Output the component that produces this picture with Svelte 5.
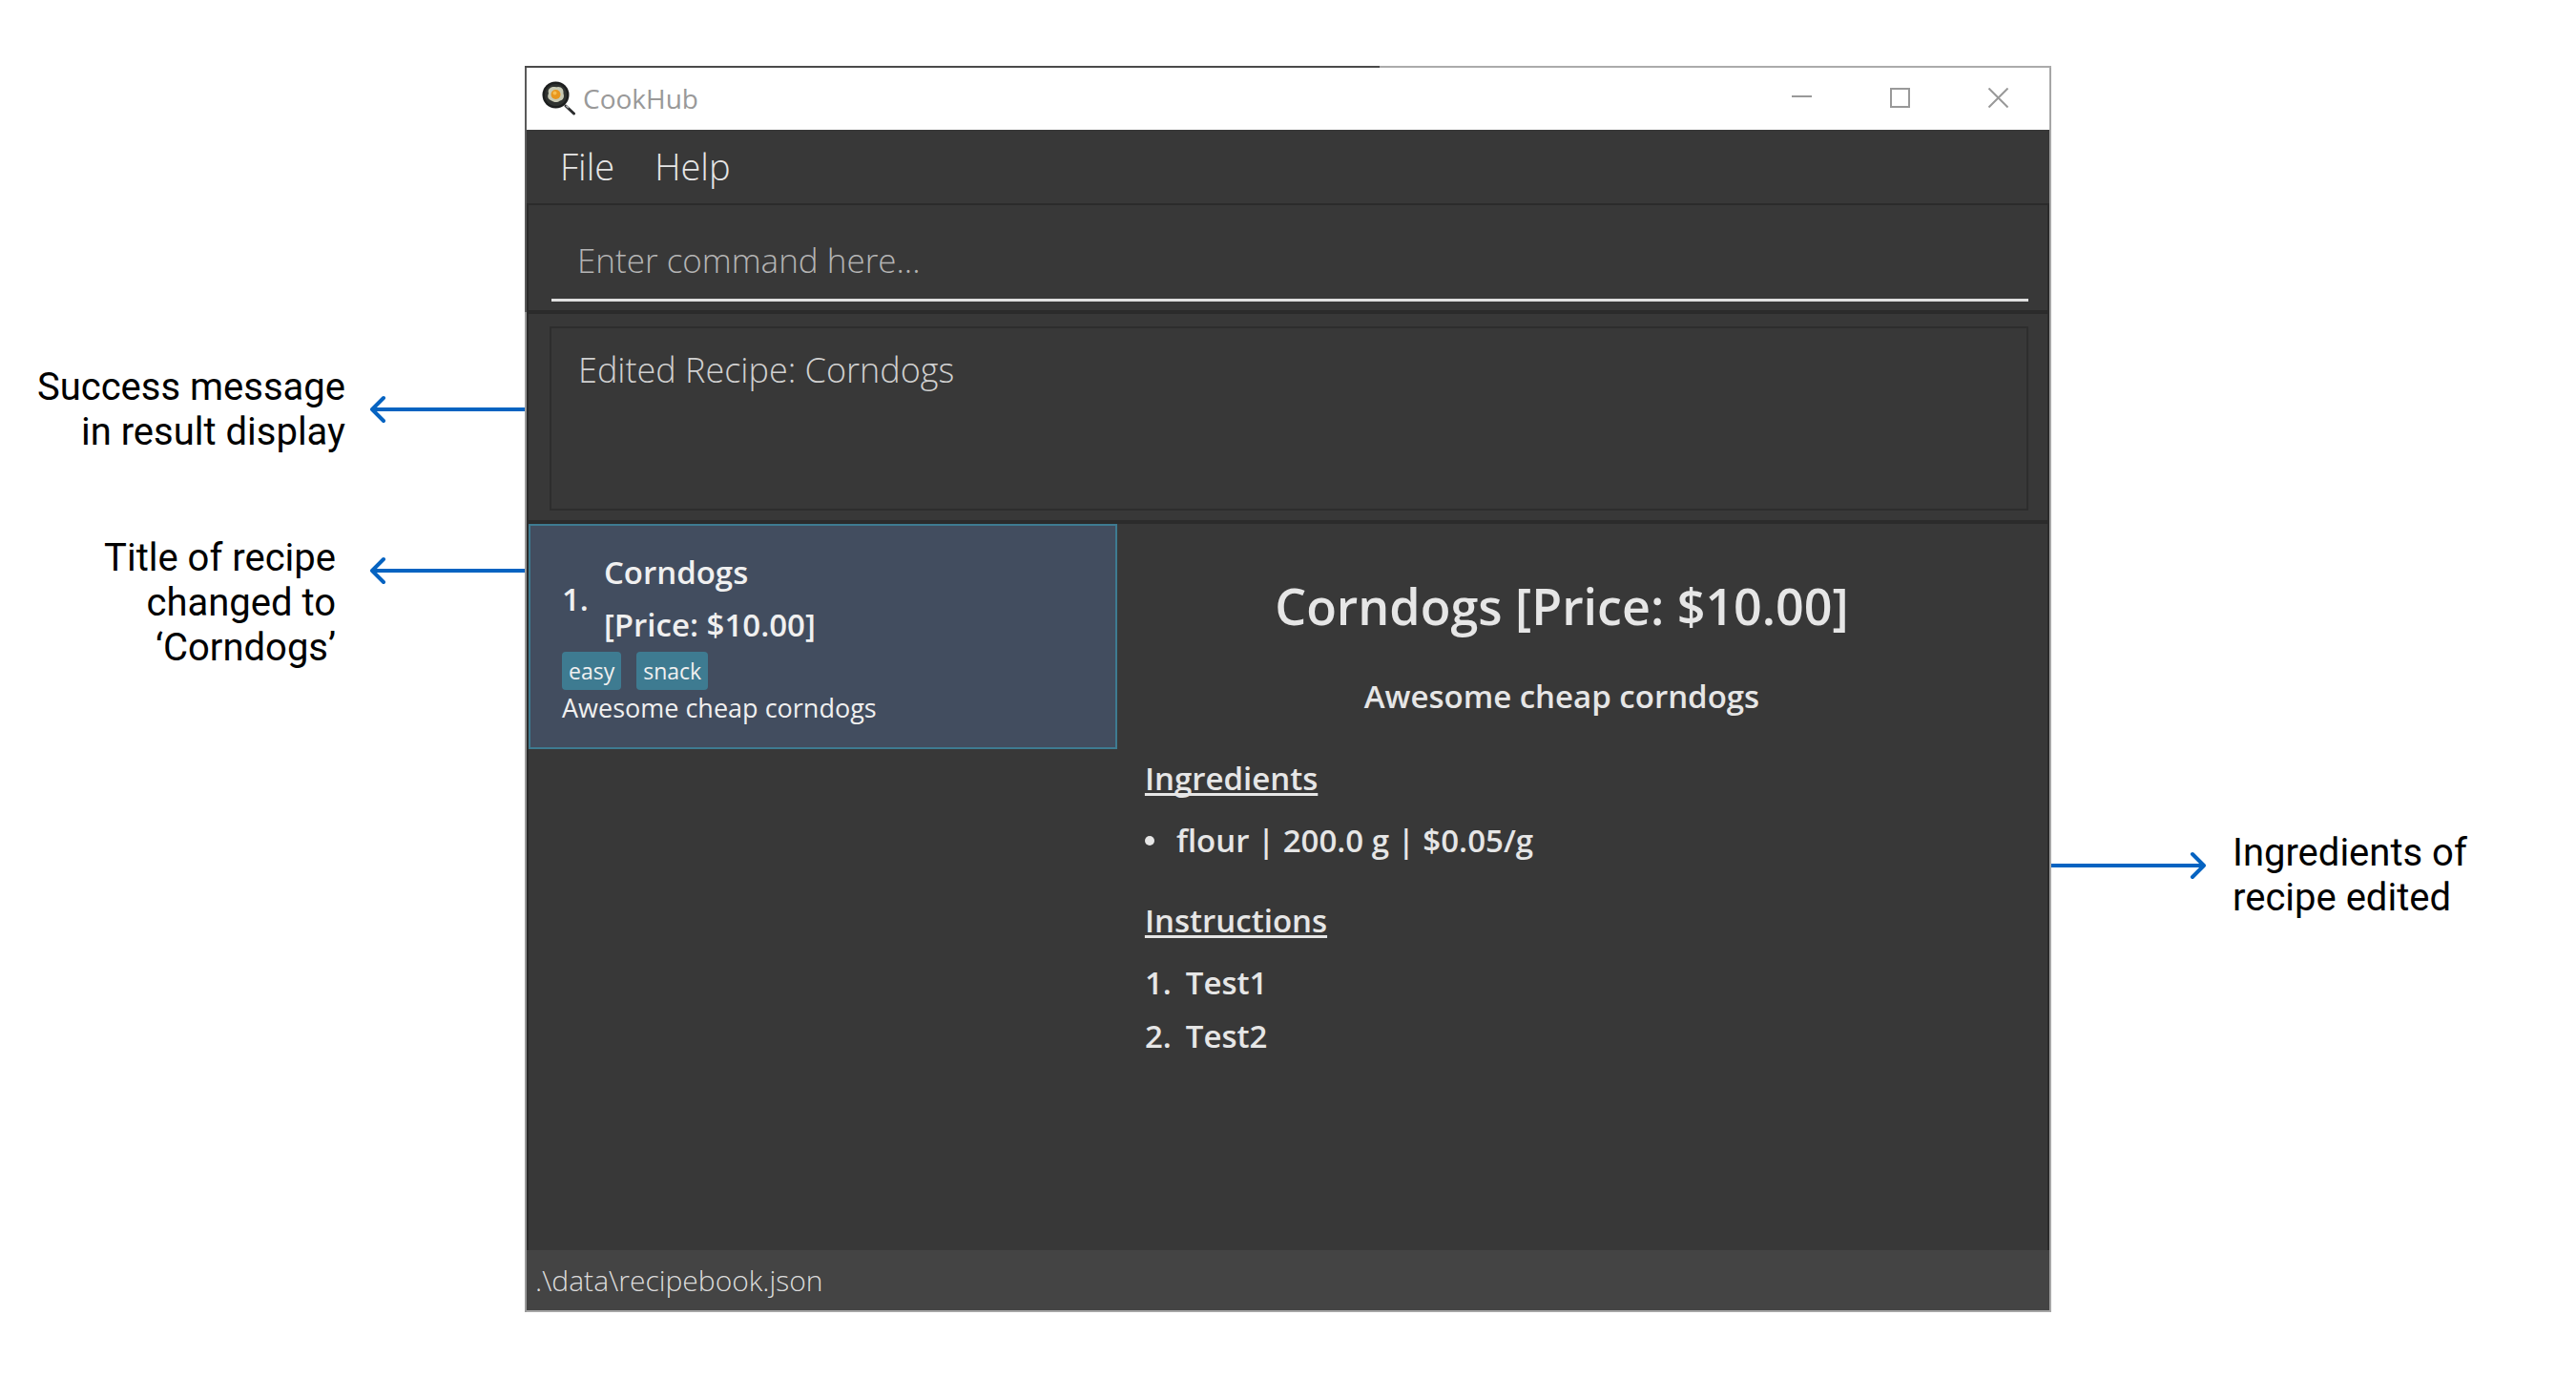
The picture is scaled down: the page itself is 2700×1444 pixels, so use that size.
<script>
  let command = $state('');
  const recipe = {
    name: 'Corndogs',
    price: '[Price: $10.00]',
    description: 'Awesome cheap corndogs',
    tags: ['easy', 'snack'],
    ingredients: ['flour | 200.0 g | $0.05/g'],
    steps: ['Test1', 'Test2']
  };
</script>

{#snippet arrow(kind)}
  <svg class="arrow {kind}" viewBox="0 0 162 30" aria-hidden="true">
    <path d="M162 15H2M14 3L2 15L14 27" />
  </svg>
{/snippet}

<div class="page">
  <aside class="notes left">
    <div class="note success">
      <p>Success message<br />in result display</p>
      {@render arrow('mid')}
    </div>
    <div class="note title-note">
      <p>Title of recipe<br />changed to<br />‘Corndogs’</p>
      {@render arrow('first')}
    </div>
  </aside>

  <main class="window">
    <header class="titlebar">
      <svg class="logo" viewBox="0 0 36 36" aria-hidden="true">
        <path d="M25 26L33.500 34" stroke="#2b2c2e" stroke-width="3" stroke-linecap="round" />
        <path d="M25.500 25.500L28 28" stroke="#a9abad" stroke-width="2" />
        <circle cx="14.500" cy="14.500" r="14" fill="#1c1e1e" />
        <circle cx="14.500" cy="14.500" r="11.500" fill="#2f3230" />
        <path d="M9 7C12 5 14 7 17 6C21 6 23 9 22.500 13C24 17 22 20 19 20.500C16 23 12 22 10 20.500C6 19 5.500 16 7 13C6 10 7 8 9 7Z" fill="#c9cab4" />
        <circle cx="14.500" cy="14" r="5" fill="#e8961e" />
        <circle cx="13.500" cy="12.500" r="2" fill="#f8bd4e" />
      </svg>
      <h1>CookHub</h1>
      <div class="controls">
        <button aria-label="Minimize"><svg viewBox="0 0 21 21"><path d="M0 9H21" /></svg></button>
        <button aria-label="Maximize"><svg viewBox="0 0 21 21"><rect x="1" y="1" width="19" height="19" /></svg></button>
        <button aria-label="Close"><svg viewBox="0 0 21 21"><path d="M0.500 0.500L20.500 20.500M20.500 0.500L0.500 20.500" /></svg></button>
      </div>
    </header>

    <nav class="menu">
      <button>File</button>
      <button>Help</button>
    </nav>

    <section class="panel command">
      <input type="text" aria-label="Command" placeholder="Enter command here..." bind:value={command} />
    </section>

    <section class="panel result">
      <output>Edited Recipe: Corndogs</output>
    </section>

    <section class="panel split">
      <ul class="list">
        <li>
          <button class="card">
            <span class="card-head">
              <span>1.</span>
              <span class="card-title"><span>{recipe.name}</span><span>{recipe.price}</span></span>
            </span>
            <span class="tags">
              {#each recipe.tags as tag}<span class="tag">{tag}</span>{/each}
            </span>
            <span class="summary">{recipe.description}</span>
          </button>
        </li>
      </ul>

      <article class="detail">
        <h2>{recipe.name} {recipe.price}</h2>
        <p class="lead">{recipe.description}</p>
        <h3>Ingredients</h3>
        <ul class="ingredients">
          {#each recipe.ingredients as item}<li><span class="dot"></span>{item}</li>{/each}
        </ul>
        <h3>Instructions</h3>
        <ol>
          {#each recipe.steps as step, i}<li><span>{i + 1}.</span>{step}</li>{/each}
        </ol>
      </article>
    </section>

    <footer class="status">.\data\recipebook.json</footer>
  </main>

  <aside class="notes right">
    <div class="note">
      {@render arrow('first flip')}
      <p>Ingredients of<br />recipe edited</p>
    </div>
  </aside>
</div>

<style>
  :global(body) {
    margin: 0;
    background: #fff;
  }
  .page, .page * {
    box-sizing: border-box;
  }
  .page {
    display: grid;
    grid-template-columns: 11fr 32fr 11fr;
    min-height: 100vh;
    padding: 69px 0;
    font-family: 'Open Sans', 'Noto Sans', sans-serif;
  }
  h1, h2, h3, p, ul, ol {
    margin: 0;
    padding: 0;
    list-style: none;
  }
  button {
    margin: 0;
    padding: 0;
    border: 0;
    background: none;
    color: inherit;
    font: inherit;
    text-align: left;
  }

  .notes {
    display: flex;
    flex-direction: column;
    gap: 85px;
    font: 400 40px/47px Roboto, sans-serif;
    color: #000;
  }
  .left {
    padding-top: 313px;
    align-items: flex-end;
    text-align: right;
  }
  .right {
    padding-top: 801px;
    align-items: flex-start;
  }
  .note {
    display: flex;
    align-items: flex-start;
    gap: 28px;
    white-space: nowrap;
  }
  .success { gap: 26px; }
  .title-note { gap: 36px; }
  .arrow {
    flex: none;
    width: 162px;
    height: 30px;
    fill: none;
    stroke: #0563c1;
    stroke-width: 4;
    stroke-linecap: round;
    stroke-linejoin: round;
  }
  .mid { align-self: center; }
  .first { margin-top: 22px; }
  .flip { transform: scaleX(-1); }

  .window {
    display: flex;
    flex-direction: column;
    min-width: 0;
    padding: 2px;
    background:
      linear-gradient(to right, #4a4a4a 56%, #ababab 56%) top / 100% 2px no-repeat,
      linear-gradient(#5a5a5a 258px, #9a9a9a 258px) left / 2px 100% no-repeat,
      #a6a6a6;
    color: #e6e6e6;
  }
  .titlebar {
    display: flex;
    align-items: center;
    height: 65px;
    padding: 0 2px 2px 16px;
    background: #fff;
  }
  .logo {
    width: 36px;
    height: 36px;
    fill: none;
  }
  h1 {
    flex: 1;
    padding-left: 7px;
    font-size: 28px;
    font-weight: 400;
    line-height: 38px;
    color: #999;
  }
  .controls {
    display: flex;
    align-self: stretch;
  }
  .controls button {
    display: grid;
    place-items: center;
    width: 103px;
  }
  .controls svg {
    width: 21px;
    height: 21px;
    fill: none;
    stroke: #999;
    stroke-width: 2;
  }

  .menu {
    display: flex;
    gap: 42px;
    height: 77px;
    padding-left: 35px;
    background: #383838;
    font-size: 38px;
    font-weight: 300;
  }
  .menu button {
    height: 76px;
    line-height: 76px;
  }
  .panel {
    border: 2px solid #2b2b2b;
    background: #383838;
  }
  .command {
    height: 114px;
    padding: 17px 20px 9px 24px;
  }
  input {
    display: block;
    width: 100%;
    height: 84px;
    padding: 0 27px;
    border: 0;
    border-bottom: 3px solid #e0e0e0;
    border-radius: 0;
    outline: 0;
    background: transparent;
    color: #e6e6e6;
    font: 300 35px/52px 'Open Sans', 'Noto Sans', sans-serif;
  }
  input::placeholder {
    color: #b4b4b4;
    opacity: 1;
  }
  .result {
    height: 220px;
    padding: 13px 20px 10px 22px;
  }
  output {
    display: block;
    height: 193px;
    padding: 17px 28px;
    border: 2px solid #2d2d2d;
    color: #d0d0d0;
    font-size: 36px;
    font-weight: 300;
    line-height: 54px;
  }
  .split {
    flex: 1;
    display: grid;
    grid-template-columns: 31fr 49fr;
    border-bottom: 0;
  }
  .card {
    display: block;
    width: 100%;
    padding: 21px 33px 22px;
    border: 2px solid #3e7b91;
    background: #424d5f;
    color: #f0f0f0;
  }
  .card-head {
    display: flex;
    align-items: center;
    gap: 16px;
    font-size: 33px;
    font-weight: 600;
    line-height: 55px;
  }
  .card-title {
    display: flex;
    flex-direction: column;
  }
  .tags {
    display: flex;
    gap: 16px;
    margin-top: 1px;
  }
  .tag {
    padding: 0 7px;
    border-radius: 4px;
    background: #3e7b91;
    font-size: 23px;
    line-height: 40px;
  }
  .summary {
    display: block;
    font-size: 27px;
    line-height: 38px;
  }
  .detail {
    padding: 51px 72px 40px 29px;
    font-size: 33px;
    font-weight: 600;
  }
  h2 {
    font-size: 52px;
    font-weight: 600;
    line-height: 70px;
    text-align: center;
  }
  .lead {
    margin: 36px 0 38px;
    line-height: 48px;
    text-align: center;
  }
  h3 {
    margin-bottom: 13px;
    font-size: 33px;
    font-weight: 600;
    line-height: 48px;
    text-decoration: underline;
    text-decoration-thickness: 3px;
    text-underline-offset: 3px;
    text-decoration-skip-ink: none;
  }
  .detail li {
    display: flex;
    align-items: center;
    gap: 15px;
    line-height: 56px;
  }
  .detail .ingredients {
    margin-bottom: 32px;
  }
  .detail .ingredients li {
    gap: 23px;
  }
  .dot {
    width: 10px;
    height: 10px;
    border-radius: 50%;
    background: #e6e6e6;
  }
  .status {
    height: 63px;
    padding-left: 9px;
    background: #444;
    color: #dcdcdc;
    font-size: 30px;
    font-weight: 300;
    line-height: 64px;
  }
</style>
